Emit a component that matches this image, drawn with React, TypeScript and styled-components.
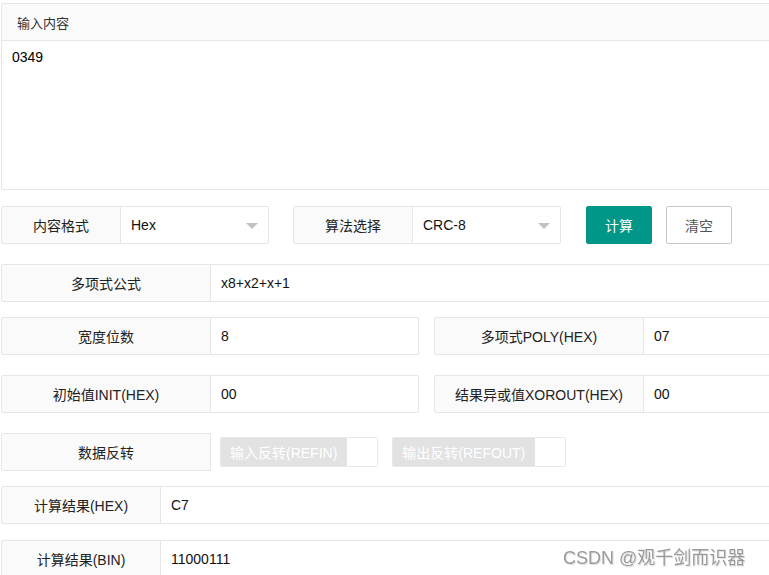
import React from "react";
import styled, { createGlobalStyle } from "styled-components";

const Global = createGlobalStyle`
  html, body { margin: 0; padding: 0; overflow: hidden; background: #fff; }
  body {
    font-family: "Liberation Sans", "Noto Sans CJK SC", sans-serif;
    font-size: 14px;
    color: #333;
  }
  * { box-sizing: border-box; }
`;

const Page = styled.div`
  width: 880px;
  padding: 3px 0 0 1px;
  display: flex;
  flex-direction: column;
`;

const Panel = styled.div`
  border: 1px solid #e6e6e6;
  border-radius: 2px;
  height: 187px;
  display: flex;
  flex-direction: column;
`;

const PanelHeader = styled.div`
  height: 37px;
  background: #fafafa;
  border-bottom: 1px solid #e6e6e6;
  padding-left: 15px;
  display: flex;
  align-items: center;
  font-size: 13px;
  color: #333;
`;

const PanelBody = styled.div`
  padding: 7px 10px;
  line-height: 18px;
  font-size: 14px;
  color: #000;
`;

const Row = styled.div<{ $mt: number }>`
  display: flex;
  align-items: center;
  height: 38px;
  margin-top: ${(p) => p.$mt}px;
`;

const Field = styled.div<{ $w?: number; $ml?: number }>`
  display: flex;
  height: 38px;
  width: ${(p) => (p.$w ? `${p.$w}px` : "auto")};
  flex: ${(p) => (p.$w ? "none" : "1")};
  margin-left: ${(p) => p.$ml ?? 0}px;
`;

const Label = styled.div<{ $w: number }>`
  width: ${(p) => p.$w}px;
  flex: none;
  height: 38px;
  background: #fafafa;
  border: 1px solid #e6e6e6;
  border-radius: 2px 0 0 2px;
  display: flex;
  align-items: center;
  justify-content: center;
  color: #222;
`;

const Value = styled.div`
  flex: 1;
  height: 38px;
  border: 1px solid #e6e6e6;
  border-left: none;
  border-radius: 0 2px 2px 0;
  display: flex;
  align-items: center;
  padding-left: 10px;
  color: #111;
  position: relative;
`;

const Arrow = styled.span`
  position: absolute;
  right: 10px;
  top: 16px;
  width: 0;
  height: 0;
  border-left: 6px solid transparent;
  border-right: 6px solid transparent;
  border-top: 6px solid #c2c2c2;
`;

const Button = styled.button<{ $primary?: boolean; $ml: number }>`
  height: 38px;
  padding: 0 18px;
  margin-left: ${(p) => p.$ml}px;
  border-radius: 2px;
  font-family: inherit;
  font-size: 14px;
  cursor: pointer;
  border: 1px solid ${(p) => (p.$primary ? "#009688" : "#c9c9c9")};
  background: ${(p) => (p.$primary ? "#009688" : "#fff")};
  color: ${(p) => (p.$primary ? "#fff" : "#555")};
`;

const Check = styled.div<{ $ml: number }>`
  display: flex;
  height: 30px;
  margin-left: ${(p) => p.$ml}px;
  border: 1px solid #e8e8e8;
  border-radius: 2px;
`;

const CheckText = styled.span`
  background: #e2e2e2;
  color: #fff;
  padding: 0 10px 0 9px;
  display: flex;
  align-items: center;
  font-size: 14px;
`;

const CheckBox = styled.span`
  width: 30px;
  background: #fff;
`;

const Watermark = styled.div`
  position: fixed;
  left: 563px;
  top: 543px;
  font-size: 18px;
  color: #9a9a9a;
  text-shadow: 0 0 1px #fff, 1px 1px 1px rgba(0,0,0,0.15);
  white-space: nowrap;
`;

export default function App() {
  return (
    <>
      <Global />
      <Page>
        <Panel>
          <PanelHeader>输入内容</PanelHeader>
          <PanelBody>0349</PanelBody>
        </Panel>

        <Row $mt={16}>
          <Field $w={268}>
            <Label $w={120}>内容格式</Label>
            <Value>
              Hex
              <Arrow />
            </Value>
          </Field>
          <Field $w={268} $ml={24}>
            <Label $w={120}>算法选择</Label>
            <Value>
              CRC-8
              <Arrow />
            </Value>
          </Field>
          <Button $primary $ml={25}>计算</Button>
          <Button $ml={14}>清空</Button>
        </Row>

        <Row $mt={20}>
          <Field>
            <Label $w={210}>多项式公式</Label>
            <Value>x8+x2+x+1</Value>
          </Field>
        </Row>

        <Row $mt={15}>
          <Field $w={418}>
            <Label $w={210}>宽度位数</Label>
            <Value>8</Value>
          </Field>
          <Field $w={418} $ml={15}>
            <Label $w={210}>多项式POLY(HEX)</Label>
            <Value>07</Value>
          </Field>
        </Row>

        <Row $mt={20}>
          <Field $w={418}>
            <Label $w={210}>初始值INIT(HEX)</Label>
            <Value>00</Value>
          </Field>
          <Field $w={418} $ml={15}>
            <Label $w={210}>结果异或值XOROUT(HEX)</Label>
            <Value>00</Value>
          </Field>
        </Row>

        <Row $mt={20}>
          <Label $w={210}>数据反转</Label>
          <Check $ml={9}>
            <CheckText>输入反转(REFIN)</CheckText>
            <CheckBox />
          </Check>
          <Check $ml={14}>
            <CheckText>输出反转(REFOUT)</CheckText>
            <CheckBox />
          </Check>
        </Row>

        <Row $mt={15}>
          <Field>
            <Label $w={160}>计算结果(HEX)</Label>
            <Value>C7</Value>
          </Field>
        </Row>

        <Row $mt={16}>
          <Field>
            <Label $w={160}>计算结果(BIN)</Label>
            <Value>11000111</Value>
          </Field>
        </Row>
      </Page>
      <Watermark>CSDN @观千剑而识器</Watermark>
    </>
  );
}
